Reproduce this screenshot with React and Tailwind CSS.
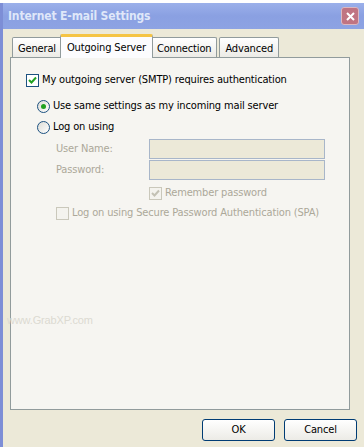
import React from "react";

const font = {
  fontFamily: "'DejaVu Sans Condensed', 'Liberation Sans', sans-serif",
  letterSpacing: "-0.15px",
};

const Check = ({ checked, disabled }) => (
  <span
    className={`w-[13px] h-[13px] border flex items-center justify-center shrink-0 ${
      disabled ? "border-[#cac8bb] bg-[#f4f3ee]" : "border-[#1c5180] bg-white"
    }`}
  >
    {checked && (
      <svg width="9" height="9" viewBox="0 0 9 9">
        <path
          d="M1 4 L3.5 6.5 L8 1.5"
          fill="none"
          stroke={disabled ? "#c3c1b4" : "#21a121"}
          strokeWidth="2"
        />
      </svg>
    )}
  </span>
);

const Radio = ({ checked }) => (
  <span className="w-[13px] h-[13px] rounded-full border border-[#1c5180] bg-gradient-to-br from-[#dcdcd6] to-white flex items-center justify-center shrink-0">
    {checked && <span className="w-[5px] h-[5px] rounded-full bg-[#21a121]" />}
  </span>
);

const Tab = ({ label, active }) =>
  active ? (
    <div className="h-[24px] -mb-px px-[6px] pt-[3px] border border-b-0 border-[#919b9c] border-t-[3px] border-t-[#f5c444] bg-[#fcfcfe] rounded-t-[2px] z-10 -mx-[2px]">
      {label}
    </div>
  ) : (
    <div className="h-[20px] px-[5px] pt-[3px] border border-b-0 border-[#919b9c] bg-gradient-to-b from-white to-[#ecebe6] rounded-t-[2px]">
      {label}
    </div>
  );

export default function App() {
  return (
    <div className="w-[364px] h-[447px] bg-white overflow-hidden text-[11px] text-black" style={font}>
      <div className="h-[3px] bg-white" />
      <div className="flex h-[444px]">
        <div className="w-[3px] bg-[#7d8ed6]" />
        <div className="flex-1 flex flex-col bg-[#ece9d8]">
          <div className="h-[26px] shrink-0 flex items-center justify-between pl-[5px] pr-[5px] bg-gradient-to-b from-[#9bb0ea] via-[#8aa0e2] to-[#8da3e3]">
            <span className="text-[12px] font-bold text-[#dfe7f9]">Internet E-mail Settings</span>
            <span className="w-[18px] h-[18px] rounded-[3px] border border-[#dcb8c0] bg-[#c07482] flex items-center justify-center">
              <svg width="11" height="11" viewBox="0 0 11 11">
                <path d="M2 2 L9 9 M9 2 L2 9" stroke="white" strokeWidth="2" />
              </svg>
            </span>
          </div>
          <div className="pl-[7px] pt-[5px] w-[354px]">
            <div className="flex items-end pl-[2px] h-[23px]">
              <Tab label="General" />
              <Tab label="Outgoing Server" active />
              <Tab label="Connection" />
              <div className="w-[2px]" />
              <Tab label="Advanced" />
            </div>
            <div className="h-[353px] w-[340px] border border-[#919b9c] bg-[#f6f5f1] relative pl-[15px] pt-[15px]">
              <div className="flex items-center gap-[3px] h-[14px]">
                <Check checked />
                <span>My outgoing server (SMTP) requires authentication</span>
              </div>
              <div className="pl-[11px] mt-[13px] flex flex-col gap-[8px]">
                <div className="flex items-center gap-[3px] h-[13px]">
                  <Radio checked />
                  <span>Use same settings as my incoming mail server</span>
                </div>
                <div className="flex items-center gap-[3px] h-[13px]">
                  <Radio />
                  <span>Log on using</span>
                </div>
              </div>
              <div className="pl-[30px] mt-[5px] text-[#aca899]">
                <div className="flex items-center h-[20px]">
                  <span className="w-[93px]">User Name:</span>
                  <div className="w-[176px] h-[20px] border border-[#a8b6c9] bg-[#ece9d8]" />
                </div>
                <div className="flex items-center h-[20px] mt-px">
                  <span className="w-[93px]">Password:</span>
                  <div className="w-[176px] h-[20px] border border-[#a8b6c9] bg-[#ece9d8]" />
                </div>
                <div className="flex items-center gap-[3px] h-[13px] mt-[7px] pl-[93px]">
                  <Check checked disabled />
                  <span>Remember password</span>
                </div>
                <div className="flex items-center gap-[3px] h-[13px] mt-[7px]">
                  <Check disabled />
                  <span>Log on using Secure Password Authentication (SPA)</span>
                </div>
              </div>
              <div className="absolute left-[-4px] top-[254px] text-[#dcdad2] text-[11px]" style={{ fontFamily: "'Liberation Sans', Arial, sans-serif" }}>
                www.GrabXP.com
              </div>
            </div>
            <div className="flex justify-end gap-[9px] mt-[9px]">
              <button className="w-[73px] h-[22px] rounded-[3px] border border-[#003c74] bg-gradient-to-b from-white to-[#ecebe6]">OK</button>
              <button className="w-[73px] h-[22px] rounded-[3px] border border-[#003c74] bg-gradient-to-b from-white to-[#ecebe6]">Cancel</button>
            </div>
          </div>
        </div>
      </div>
    </div>
  );
}
